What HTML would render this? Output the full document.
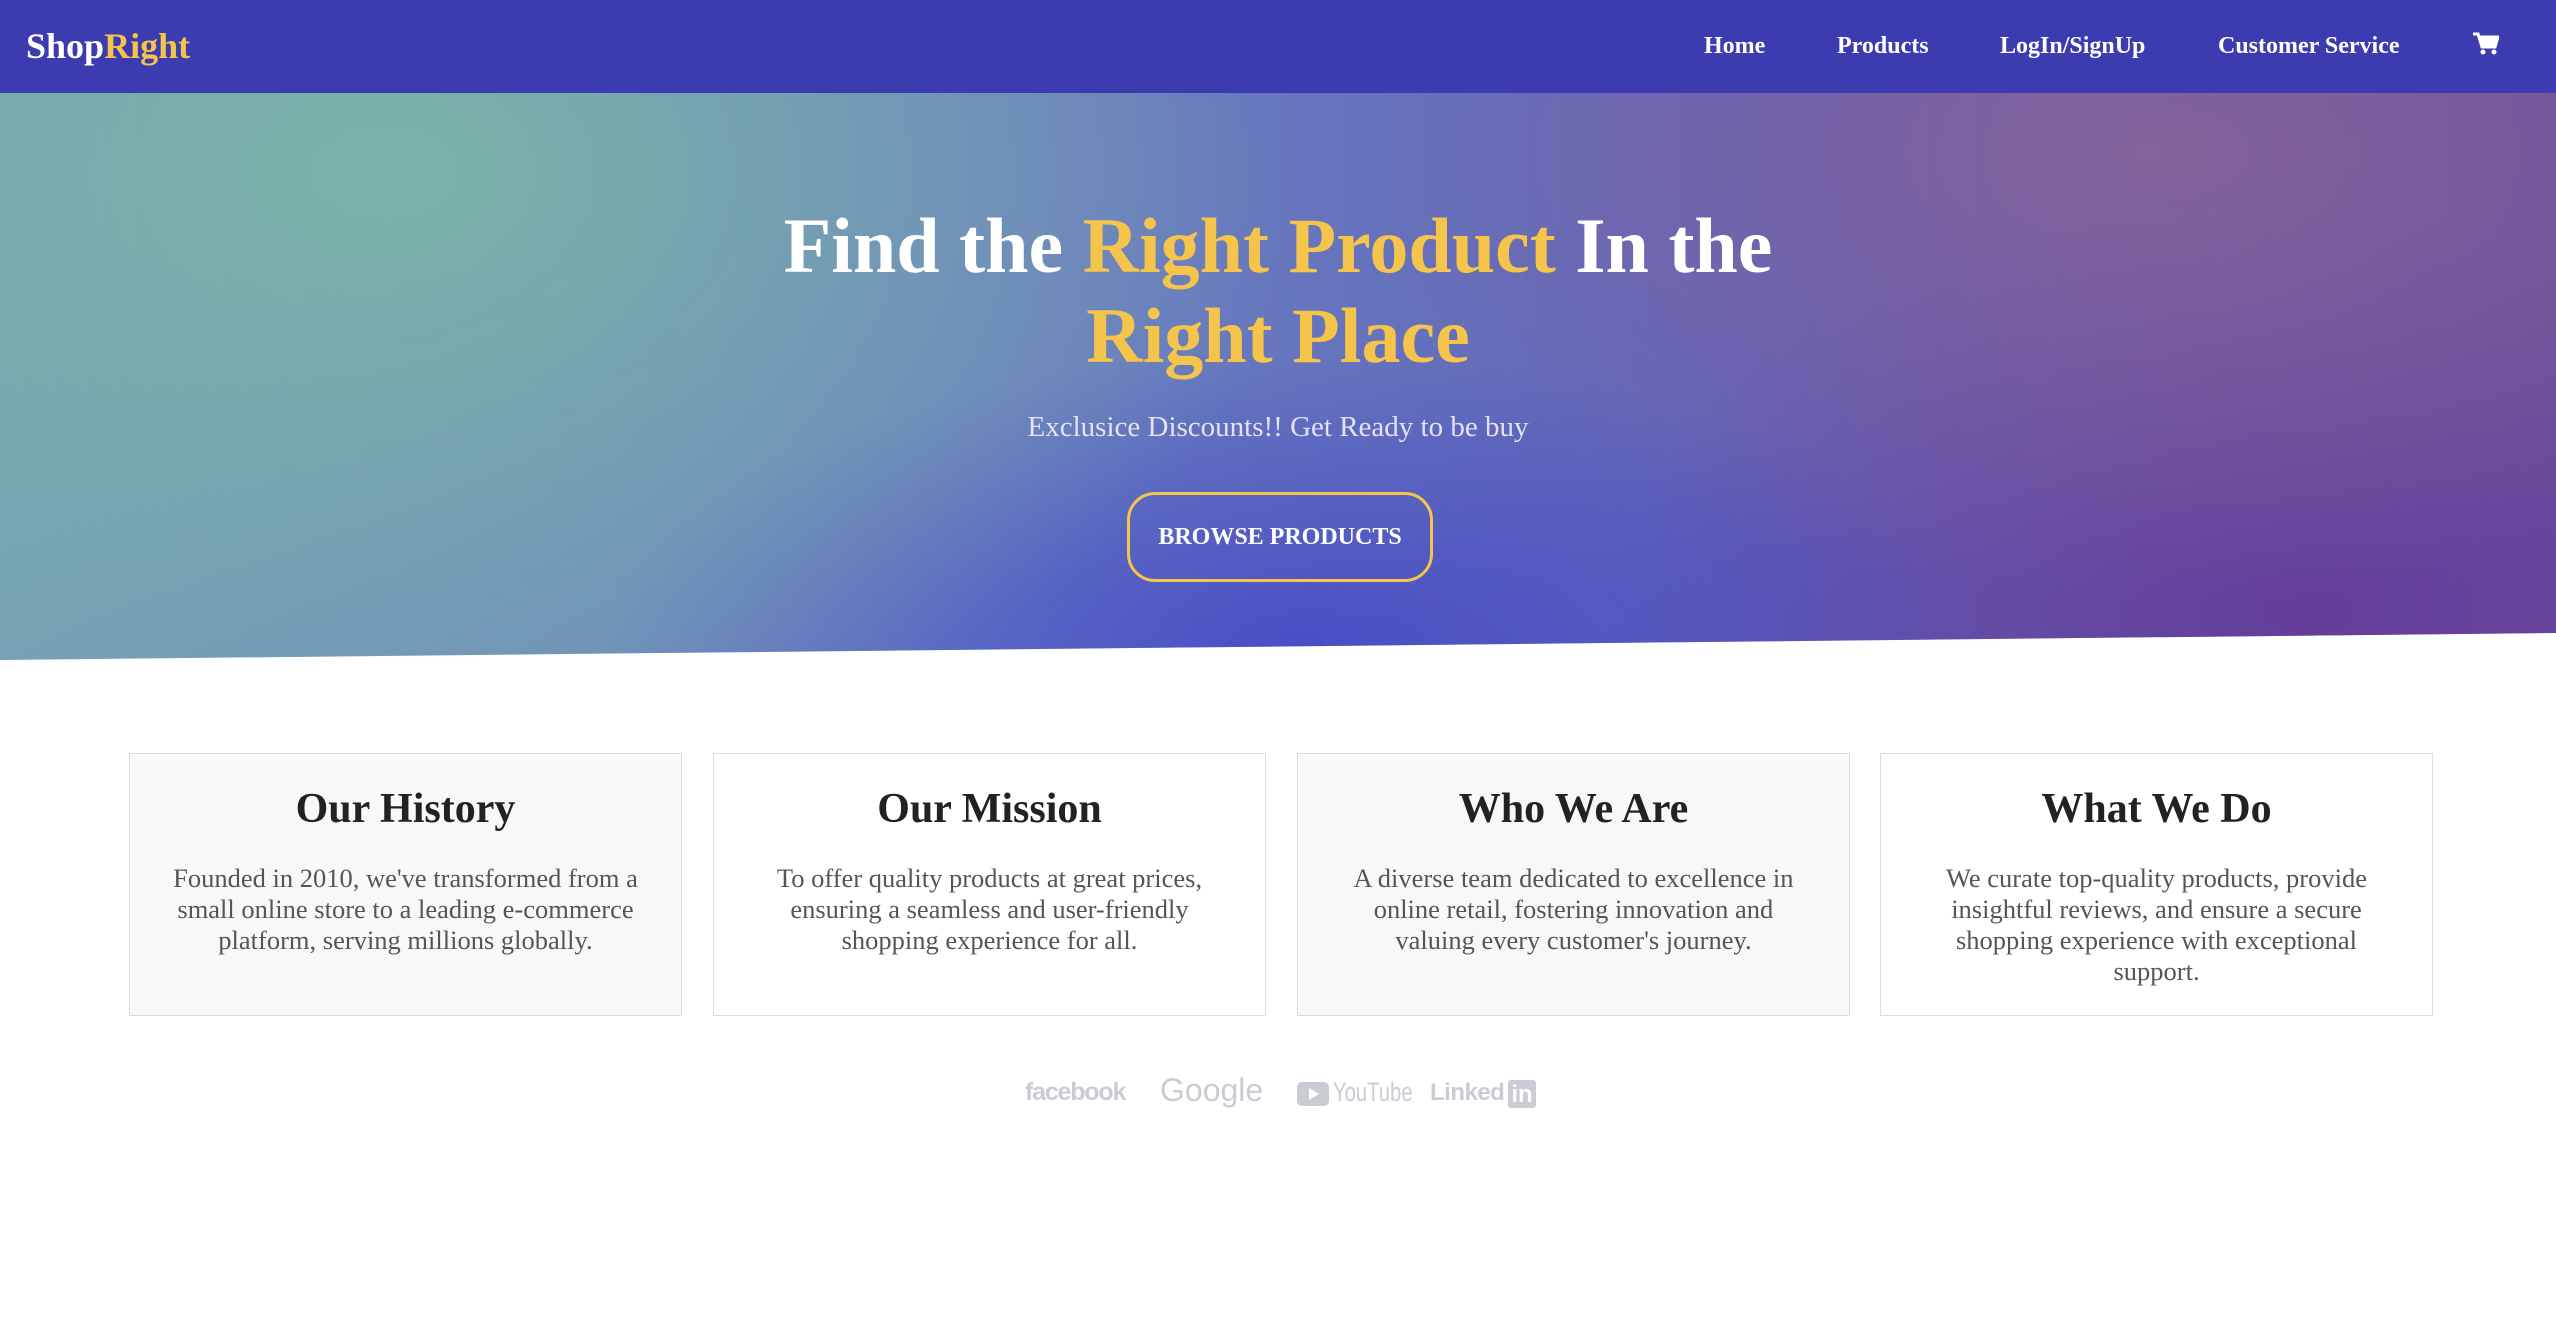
<!DOCTYPE html>
<html><head><meta charset="utf-8"><style>
*{margin:0;padding:0;box-sizing:border-box}
body{width:2556px;height:1333px;background:#fff;font-family:"Liberation Serif",serif;overflow:hidden;position:relative}
nav{position:absolute;top:0;left:0;width:2556px;height:93px;background:#3d3bb0;color:#fff}
.logo{position:absolute;left:26px;top:25px;font-size:36px;font-weight:bold}
.logo span{color:#f4c54a}
.links a{position:absolute;top:33px;font-size:24px;font-weight:bold;color:#fff;text-decoration:none}
.hero{position:absolute;top:93px;left:0;width:2556px;height:570px;
clip-path:polygon(0 0,100% 0,100% 540px,0 567px);
background:
radial-gradient(ellipse 900px 600px at 400px 80px,rgba(125,185,165,0.85),rgba(125,185,165,0) 100%),
radial-gradient(ellipse 800px 450px at 2150px 60px,rgba(140,100,150,0.8),rgba(140,100,150,0) 100%),
radial-gradient(ellipse 700px 300px at 1300px 560px,rgba(60,60,200,0.7),rgba(60,60,200,0) 100%),
radial-gradient(ellipse 700px 400px at 2300px 520px,rgba(100,55,150,0.8),rgba(100,55,150,0) 100%),
linear-gradient(90deg,#76a0b6 0%,#6a80c0 40%,#6062b8 70%,#6a4fa0 100%)}
h1{position:absolute;top:108px;left:0;width:2556px;text-align:center;font-size:78px;line-height:90px;color:#fff;font-weight:bold}
h1 span{color:#f4c54a}
.sub{position:absolute;top:318px;left:0;width:2556px;text-align:center;font-size:29px;color:#e3e3f3}
.btn{position:absolute;left:1127px;top:399px;width:306px;height:90px;border:3px solid #f4c54a;border-radius:28px;color:#fff;font-size:24px;font-weight:bold;text-align:center;line-height:84px}
.card{position:absolute;top:753px;width:553px;height:263px;border:1.5px solid #dcdcdc;text-align:center}
.card h2{font-size:42px;margin-top:31px;color:#222;font-weight:bold}
.card p{font-size:26.5px;line-height:31px;color:#555;margin:30px 38px 0}
.logos{position:absolute;top:1072px;left:1025px;font-family:"Liberation Sans",sans-serif;color:#c9ccd3;font-weight:bold}
.logos span{position:absolute;white-space:nowrap}
</style></head><body>
<nav><div class="logo">Shop<span>Right</span></div>
<div class="links"><a style="left:1704px">Home</a><a style="left:1837px">Products</a><a style="left:2000px">LogIn/SignUp</a><a style="left:2218px">Customer Service</a>
<svg style="position:absolute;left:2473px;top:32px" width="26" height="24" viewBox="0 0 26 24"><path d="M0 2h5l4 13h13l3-10H7" fill="none" stroke="#fff" stroke-width="3"/><rect x="8" y="6" width="16" height="8" fill="#fff"/><circle cx="10" cy="20" r="2.5" fill="#fff"/><circle cx="21" cy="20" r="2.5" fill="#fff"/></svg></div></nav>
<div class="hero">
<h1>Find the <span>Right Product</span> In the<br><span>Right Place</span></h1>
<div class="sub">Exclusice Discounts!! Get Ready to be buy</div>
<div class="btn">BROWSE PRODUCTS</div>
</div>
<div class="card" style="left:129px;background:#f8f8f8"><h2>Our History</h2><p>Founded in 2010, we've transformed from a small online store to a leading e-commerce platform, serving millions globally.</p></div>
<div class="card" style="left:713px"><h2>Our Mission</h2><p>To offer quality products at great prices, ensuring a seamless and user-friendly shopping experience for all.</p></div>
<div class="card" style="left:1297px;background:#f8f8f8"><h2>Who We Are</h2><p>A diverse team dedicated to excellence in online retail, fostering innovation and valuing every customer's journey.</p></div>
<div class="card" style="left:1880px"><h2>What We Do</h2><p>We curate top-quality products, provide insightful reviews, and ensure a secure shopping experience with exceptional support.</p></div>
<div class="logos">
<span style="left:0;top:6px;font-size:25px;letter-spacing:-1.2px">facebook</span>
<span style="left:135px;top:0px;font-weight:normal;font-size:32px">Google</span>
<span style="left:272px;top:10px;width:32px;height:24px;background:#c9ccd3;border-radius:5px"></span>
<svg style="position:absolute;left:284px;top:16px" width="10" height="12"><path d="M0 0L10 6L0 12Z" fill="#fff"/></svg>
<span style="left:308px;top:5px;font-weight:normal;font-size:27px;transform:scaleX(0.75);transform-origin:left">YouTube</span>
<span style="left:405px;top:7px;font-size:24px;letter-spacing:-0.5px">Linked</span>
<span style="left:483px;top:8px;width:28px;height:28px;background:#c9ccd3;border-radius:3px;color:#fff;font-size:24px;line-height:30px;text-align:center">in</span>
</div>
</body></html>
